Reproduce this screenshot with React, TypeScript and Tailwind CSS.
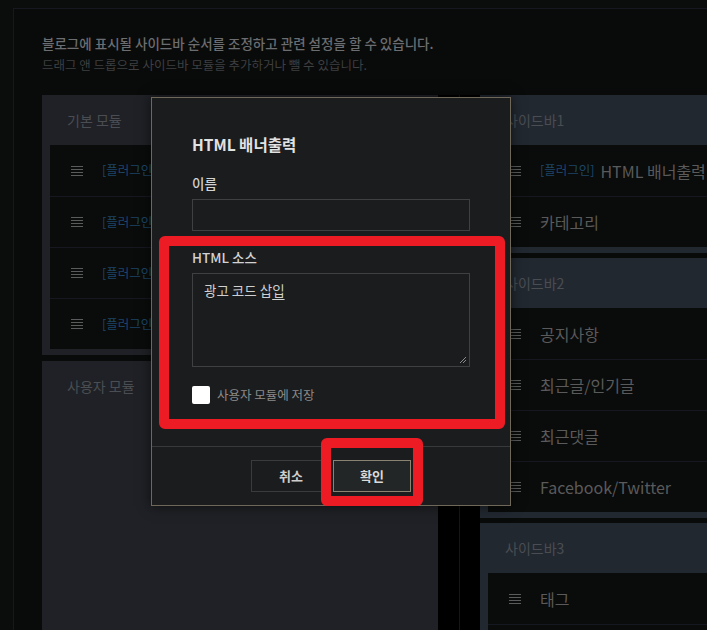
import React from "react";

const font = { fontFamily: '"Noto Sans CJK KR", "Noto Sans", sans-serif' };

const Burger: React.FC = () => (
  <svg width="12" height="10" viewBox="0 0 12 10" className="shrink-0">
    <path d="M0 0.5H12M0 3.5H12M0 6.5H12M0 9.5H12" stroke="#595b5d" strokeWidth="1" />
  </svg>
);

type Row = { plugin?: boolean; name?: string };

const ModuleRow: React.FC<{ row: Row; first: boolean }> = ({ row, first }) => (
  <div
    className={
      "h-[51px] flex items-center pl-[21px] gap-[19px] bg-[#0a0b0b] " +
      (first ? "" : "border-t border-[#161821]")
    }
  >
    <Burger />
    <div className="flex items-center gap-[6px] whitespace-nowrap">
      {row.plugin && <span className="text-[12.5px] text-[#1d4668]">[플러그인]</span>}
      {row.name && <span className="text-[16px] text-[#5a5a5a]">{row.name}</span>}
    </div>
  </div>
);

const Panel: React.FC<{ title: string; rows: Row[]; bg: string; grow?: boolean }> = ({
  title,
  rows,
  bg,
  grow,
}) => (
  <div className={bg + " pb-[6px] " + (grow ? "flex-1" : "")}>
    <div className="h-[50px] flex items-center pl-[25px] text-[14px] text-[#4a4d52]">{title}</div>
    {rows.length > 0 && (
      <div className="mx-[8px]">
        {rows.map((r, i) => (
          <ModuleRow key={i} row={r} first={i === 0} />
        ))}
      </div>
    )}
  </div>
);

export default function App() {
  const basic: Row[] = [{ plugin: true }, { plugin: true }, { plugin: true }, { plugin: true }];

  return (
    <div style={font} className="relative w-[707px] h-[630px] overflow-hidden bg-[#0b0c0c] pt-2 pl-[13px]">
      <div className="h-full border-l border-t border-[#161821] bg-[#090a0a] pl-[28px] pt-[24px]">
        <p className="text-[13.5px] leading-[20px] font-medium text-[#6b6d70] whitespace-nowrap">
          블로그에 표시될 사이드바 순서를 조정하고 관련 설정을 할 수 있습니다.
        </p>
        <p className="mt-[2px] text-[12.5px] leading-[19px] text-[#3e3f41] whitespace-nowrap">
          드래그 앤 드롭으로 사이드바 모듈을 추가하거나 뺄 수 있습니다.
        </p>

        <div className="mt-[21px] flex h-[600px]">
          <div className="w-[396px] shrink-0 flex flex-col gap-[6px]">
            <Panel title="기본 모듈" rows={basic} bg="bg-[#1f2126]" />
            <Panel title="사용자 모듈" rows={[]} bg="bg-[#1f2126]" grow />
          </div>

          <div className="w-[42px] shrink-0 flex bg-black">
            <div className="w-[21px]" />
            <div className="w-px bg-[#15161b]" />
          </div>

          <div className="w-[396px] shrink-0 flex flex-col gap-[5px]">
            <Panel
              title="사이드바1"
              bg="bg-[#222830]"
              rows={[{ plugin: true, name: "HTML 배너출력" }, { name: "카테고리" }]}
            />
            <Panel
              title="사이드바2"
              bg="bg-[#222830]"
              rows={[
                { name: "공지사항" },
                { name: "최근글/인기글" },
                { name: "최근댓글" },
                { name: "Facebook/Twitter" },
              ]}
            />
            <Panel title="사이드바3" bg="bg-[#222830]" rows={[{ name: "태그" }, {}]} />
          </div>
        </div>
      </div>

      {/* modal */}
      <div className="absolute left-[151px] top-[97px] w-[360px] h-[409px] bg-[#1b1c1e] border border-[#6f6858] shadow-[0_0_12px_rgba(0,0,0,0.6)] flex flex-col">
        <div className="flex-1 pl-[40px] pr-[40px] pt-[36px]">
          <h2 className="text-[15.5px] leading-[20px] font-bold text-[#e2e2e2]">HTML 배너출력</h2>
          <div className="mt-[20px] text-[13.5px] leading-[18px] font-medium text-[#d2d2d2]">이름</div>
          <div className="mt-[7px] h-[32px] w-[278px] border border-[#3f4042]" />
          <div className="mt-[17px] text-[13.5px] leading-[18px] font-medium text-[#d2d2d2]">HTML 소스</div>
          <div className="relative mt-[7px] h-[94px] w-[278px] border border-[#3f4042] pl-[11px] pt-[6px] text-[13.5px] leading-[20px] text-[#cfcfcf]">
            광고 코드 삽<span className="underline underline-offset-[3px]">입</span>
            <svg width="8" height="8" viewBox="0 0 8 8" className="absolute right-[2px] bottom-[2px]">
              <path d="M7 1L1 7M7 4L4 7" stroke="#8a8a8a" strokeWidth="1" />
            </svg>
          </div>
          <label className="mt-[19px] flex items-center gap-[7px]">
            <span className="w-[18px] h-[18px] rounded-[2px] bg-white" />
            <span className="text-[12.5px] text-[#8b8b8b]">사용자 모듈에 저장</span>
          </label>
        </div>
        <div className="border-t border-[#38393b] h-[59px] flex items-center justify-center gap-[2px]">
          <button className="w-[80px] h-[32px] border border-[#3a3b3d] text-[13px] font-bold text-[#cdcdcd]">
            취소
          </button>
          <button className="w-[78px] h-[32px] border border-[#8b8372] bg-[#232627] text-[13px] font-bold text-[#dadada]">
            확인
          </button>
        </div>
      </div>

      {/* highlight boxes */}
      <div className="absolute left-[159px] top-[236px] w-[346px] h-[193px] border-[10px] border-[#ed1c24] rounded-[6px]" />
      <div className="absolute left-[321px] top-[438px] w-[102px] h-[68px] border-[10px] border-[#ed1c24] rounded-[6px]" />
    </div>
  );
}
